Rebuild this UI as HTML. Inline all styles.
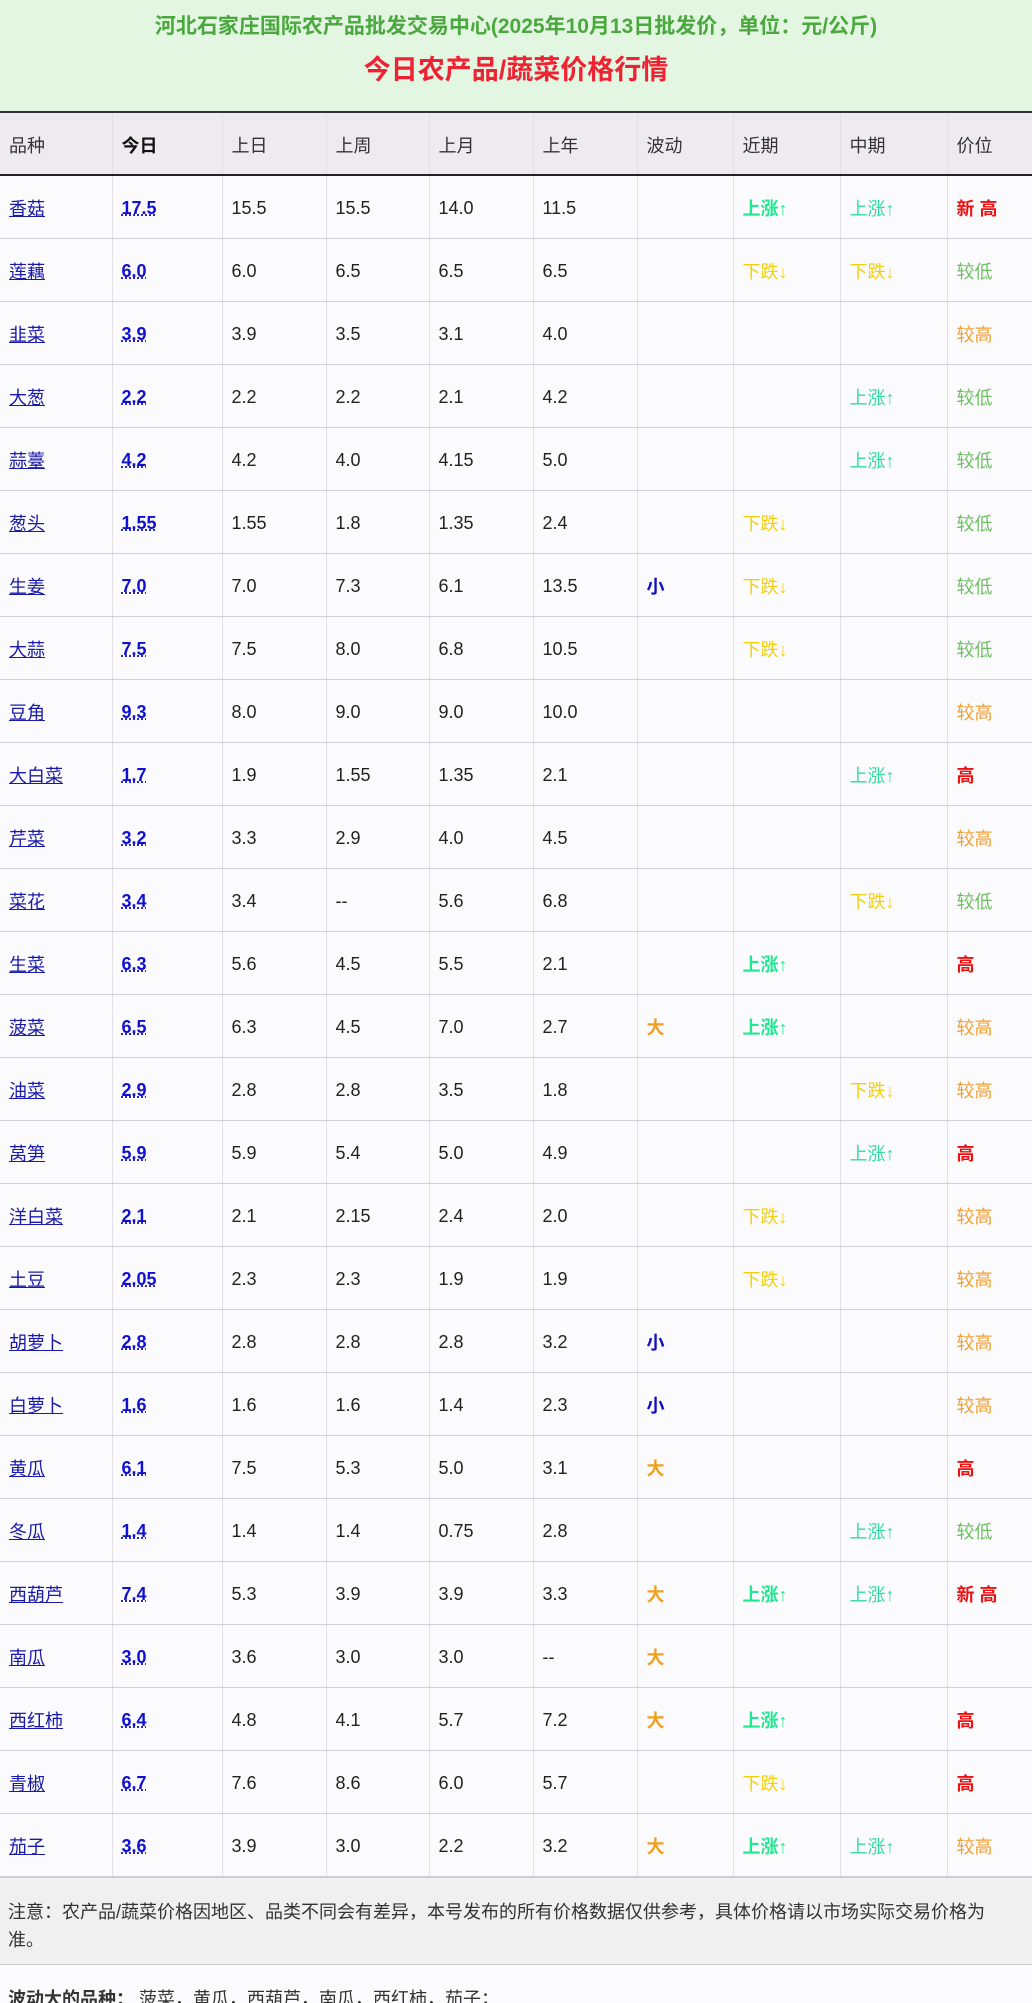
<!DOCTYPE html>
<html><head><meta charset="utf-8">
<style>
*{margin:0;padding:0;box-sizing:border-box}
html,body{width:1032px;height:2003px;overflow:hidden;background:#fbfafd;font-family:"Liberation Sans","Noto Sans CJK SC",sans-serif}
.hd{height:113px;background:#e2f6e2;text-align:center;border-bottom:2px solid #333}
.t1{padding-top:14px;color:#4aa83e;font-size:21px;font-weight:bold;line-height:26px}
.t2{margin-top:14px;color:#ee2233;font-size:27px;font-weight:bold;line-height:32px}
table{border-collapse:collapse;width:1032px;table-layout:fixed}
td,th{border-right:1px solid #e2e0e6;border-bottom:1px solid #d2d0d6;text-align:left;padding-left:9px;padding-top:3px;font-size:18px;color:#222;height:63px;font-weight:normal;white-space:nowrap}
td:last-child,th:last-child{border-right:none}
th{background:#edebf0;height:62px;border-bottom:2px solid #222;color:#333}
th.b{font-weight:bold;color:#111}
td a{color:#1a1aaa;text-decoration:underline}
td b.v{color:#1010d0;text-decoration:underline dotted;font-weight:bold}
.s{color:#1010c0;font-weight:bold}
.d{color:#f0a020;font-weight:bold}
.u1{color:#20e890;font-weight:bold}
.u2{color:#30dda0}
.dn{color:#f2d010}
.lo{color:#6cc060}
.hi{color:#f0a030}
.h{color:#ee1111;font-weight:bold}
.note{background:#f0f0f0;border-top:1px solid #ccc;border-bottom:1px solid #ccc;height:88px;padding:20px 8px 0;font-size:18px;line-height:28px;color:#333;white-space:nowrap}
.last{padding:20px 8px;font-size:18px;color:#333}
</style></head><body>
<div class="hd"><div class="t1">河北石家庄国际农产品批发交易中心(2025年10月13日批发价，单位：元/公斤)</div><div class="t2">今日农产品/蔬菜价格行情</div></div>
<table>
<colgroup><col style="width:112px"><col style="width:110px"><col style="width:104px"><col style="width:103px"><col style="width:104px"><col style="width:104px"><col style="width:96px"><col style="width:107px"><col style="width:107px"><col style="width:85px"></colgroup>
<tr><th>品种</th><th class="b">今日</th><th>上日</th><th>上周</th><th>上月</th><th>上年</th><th>波动</th><th>近期</th><th>中期</th><th>价位</th></tr>
<tr><td><a>香菇</a></td><td><b class="v">17.5</b></td><td>15.5</td><td>15.5</td><td>14.0</td><td>11.5</td><td></td><td class="u1">上涨↑</td><td class="u2">上涨↑</td><td class="h">新 高</td></tr>
<tr><td><a>莲藕</a></td><td><b class="v">6.0</b></td><td>6.0</td><td>6.5</td><td>6.5</td><td>6.5</td><td></td><td class="dn">下跌↓</td><td class="dn">下跌↓</td><td class="lo">较低</td></tr>
<tr><td><a>韭菜</a></td><td><b class="v">3.9</b></td><td>3.9</td><td>3.5</td><td>3.1</td><td>4.0</td><td></td><td></td><td></td><td class="hi">较高</td></tr>
<tr><td><a>大葱</a></td><td><b class="v">2.2</b></td><td>2.2</td><td>2.2</td><td>2.1</td><td>4.2</td><td></td><td></td><td class="u2">上涨↑</td><td class="lo">较低</td></tr>
<tr><td><a>蒜薹</a></td><td><b class="v">4.2</b></td><td>4.2</td><td>4.0</td><td>4.15</td><td>5.0</td><td></td><td></td><td class="u2">上涨↑</td><td class="lo">较低</td></tr>
<tr><td><a>葱头</a></td><td><b class="v">1.55</b></td><td>1.55</td><td>1.8</td><td>1.35</td><td>2.4</td><td></td><td class="dn">下跌↓</td><td></td><td class="lo">较低</td></tr>
<tr><td><a>生姜</a></td><td><b class="v">7.0</b></td><td>7.0</td><td>7.3</td><td>6.1</td><td>13.5</td><td class="s">小</td><td class="dn">下跌↓</td><td></td><td class="lo">较低</td></tr>
<tr><td><a>大蒜</a></td><td><b class="v">7.5</b></td><td>7.5</td><td>8.0</td><td>6.8</td><td>10.5</td><td></td><td class="dn">下跌↓</td><td></td><td class="lo">较低</td></tr>
<tr><td><a>豆角</a></td><td><b class="v">9.3</b></td><td>8.0</td><td>9.0</td><td>9.0</td><td>10.0</td><td></td><td></td><td></td><td class="hi">较高</td></tr>
<tr><td><a>大白菜</a></td><td><b class="v">1.7</b></td><td>1.9</td><td>1.55</td><td>1.35</td><td>2.1</td><td></td><td></td><td class="u2">上涨↑</td><td class="h">高</td></tr>
<tr><td><a>芹菜</a></td><td><b class="v">3.2</b></td><td>3.3</td><td>2.9</td><td>4.0</td><td>4.5</td><td></td><td></td><td></td><td class="hi">较高</td></tr>
<tr><td><a>菜花</a></td><td><b class="v">3.4</b></td><td>3.4</td><td>--</td><td>5.6</td><td>6.8</td><td></td><td></td><td class="dn">下跌↓</td><td class="lo">较低</td></tr>
<tr><td><a>生菜</a></td><td><b class="v">6.3</b></td><td>5.6</td><td>4.5</td><td>5.5</td><td>2.1</td><td></td><td class="u1">上涨↑</td><td></td><td class="h">高</td></tr>
<tr><td><a>菠菜</a></td><td><b class="v">6.5</b></td><td>6.3</td><td>4.5</td><td>7.0</td><td>2.7</td><td class="d">大</td><td class="u1">上涨↑</td><td></td><td class="hi">较高</td></tr>
<tr><td><a>油菜</a></td><td><b class="v">2.9</b></td><td>2.8</td><td>2.8</td><td>3.5</td><td>1.8</td><td></td><td></td><td class="dn">下跌↓</td><td class="hi">较高</td></tr>
<tr><td><a>莴笋</a></td><td><b class="v">5.9</b></td><td>5.9</td><td>5.4</td><td>5.0</td><td>4.9</td><td></td><td></td><td class="u2">上涨↑</td><td class="h">高</td></tr>
<tr><td><a>洋白菜</a></td><td><b class="v">2.1</b></td><td>2.1</td><td>2.15</td><td>2.4</td><td>2.0</td><td></td><td class="dn">下跌↓</td><td></td><td class="hi">较高</td></tr>
<tr><td><a>土豆</a></td><td><b class="v">2.05</b></td><td>2.3</td><td>2.3</td><td>1.9</td><td>1.9</td><td></td><td class="dn">下跌↓</td><td></td><td class="hi">较高</td></tr>
<tr><td><a>胡萝卜</a></td><td><b class="v">2.8</b></td><td>2.8</td><td>2.8</td><td>2.8</td><td>3.2</td><td class="s">小</td><td></td><td></td><td class="hi">较高</td></tr>
<tr><td><a>白萝卜</a></td><td><b class="v">1.6</b></td><td>1.6</td><td>1.6</td><td>1.4</td><td>2.3</td><td class="s">小</td><td></td><td></td><td class="hi">较高</td></tr>
<tr><td><a>黄瓜</a></td><td><b class="v">6.1</b></td><td>7.5</td><td>5.3</td><td>5.0</td><td>3.1</td><td class="d">大</td><td></td><td></td><td class="h">高</td></tr>
<tr><td><a>冬瓜</a></td><td><b class="v">1.4</b></td><td>1.4</td><td>1.4</td><td>0.75</td><td>2.8</td><td></td><td></td><td class="u2">上涨↑</td><td class="lo">较低</td></tr>
<tr><td><a>西葫芦</a></td><td><b class="v">7.4</b></td><td>5.3</td><td>3.9</td><td>3.9</td><td>3.3</td><td class="d">大</td><td class="u1">上涨↑</td><td class="u2">上涨↑</td><td class="h">新 高</td></tr>
<tr><td><a>南瓜</a></td><td><b class="v">3.0</b></td><td>3.6</td><td>3.0</td><td>3.0</td><td>--</td><td class="d">大</td><td></td><td></td><td></td></tr>
<tr><td><a>西红柿</a></td><td><b class="v">6.4</b></td><td>4.8</td><td>4.1</td><td>5.7</td><td>7.2</td><td class="d">大</td><td class="u1">上涨↑</td><td></td><td class="h">高</td></tr>
<tr><td><a>青椒</a></td><td><b class="v">6.7</b></td><td>7.6</td><td>8.6</td><td>6.0</td><td>5.7</td><td></td><td class="dn">下跌↓</td><td></td><td class="h">高</td></tr>
<tr><td><a>茄子</a></td><td><b class="v">3.6</b></td><td>3.9</td><td>3.0</td><td>2.2</td><td>3.2</td><td class="d">大</td><td class="u1">上涨↑</td><td class="u2">上涨↑</td><td class="hi">较高</td></tr>
</table>
<div class="note">注意：农产品/蔬菜价格因地区、品类不同会有差异，本号发布的所有价格数据仅供参考，具体价格请以市场实际交易价格为<br>准。</div>
<div class="last"><b>波动大的品种：</b> 菠菜，黄瓜，西葫芦，南瓜，西红柿，茄子；</div>
</body></html>
